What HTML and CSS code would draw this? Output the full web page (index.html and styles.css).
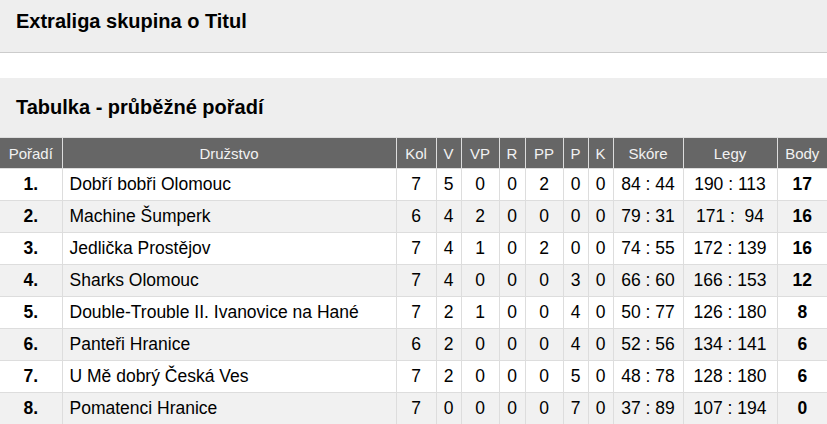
FILE: index.html
```html
<!DOCTYPE html>
<html lang="cs">
<head>
<meta charset="utf-8">
<title>Extraliga skupina o Titul</title>
<link rel="stylesheet" href="styles.css">
</head>
<body>
<header class="page-head">
  <h1 class="page-title">Extraliga skupina o Titul</h1>
</header>
<section class="panel">
  <h2 class="panel-title">Tabulka - průběžné pořadí</h2>
  <table class="standings">
    <colgroup>
      <col class="c-rank"><col class="c-team"><col class="c-kol"><col class="c-v"><col class="c-vp"><col class="c-r"><col class="c-pp"><col class="c-p"><col class="c-k"><col class="c-score"><col class="c-legs"><col class="c-pts">
    </colgroup>
    <thead>
      <tr><th>Pořadí</th><th>Družstvo</th><th>Kol</th><th>V</th><th>VP</th><th>R</th><th>PP</th><th>P</th><th>K</th><th>Skóre</th><th>Legy</th><th>Body</th></tr>
    </thead>
    <tbody>
      <tr><td class="rank">1.</td><td class="team">Dobří bobři Olomouc</td><td>7</td><td>5</td><td>0</td><td>0</td><td>2</td><td>0</td><td>0</td><td>84 : 44</td><td>190 : 113</td><td class="pts">17</td></tr>
      <tr><td class="rank">2.</td><td class="team">Machine Šumperk</td><td>6</td><td>4</td><td>2</td><td>0</td><td>0</td><td>0</td><td>0</td><td>79 : 31</td><td>171 :&nbsp;&nbsp;94</td><td class="pts">16</td></tr>
      <tr><td class="rank">3.</td><td class="team">Jedlička Prostějov</td><td>7</td><td>4</td><td>1</td><td>0</td><td>2</td><td>0</td><td>0</td><td>74 : 55</td><td>172 : 139</td><td class="pts">16</td></tr>
      <tr><td class="rank">4.</td><td class="team">Sharks Olomouc</td><td>7</td><td>4</td><td>0</td><td>0</td><td>0</td><td>3</td><td>0</td><td>66 : 60</td><td>166 : 153</td><td class="pts">12</td></tr>
      <tr><td class="rank">5.</td><td class="team">Double-Trouble II. Ivanovice na Hané</td><td>7</td><td>2</td><td>1</td><td>0</td><td>0</td><td>4</td><td>0</td><td>50 : 77</td><td>126 : 180</td><td class="pts">8</td></tr>
      <tr><td class="rank">6.</td><td class="team">Panteři Hranice</td><td>6</td><td>2</td><td>0</td><td>0</td><td>0</td><td>4</td><td>0</td><td>52 : 56</td><td>134 : 141</td><td class="pts">6</td></tr>
      <tr><td class="rank">7.</td><td class="team">U Mě dobrý Česká Ves</td><td>7</td><td>2</td><td>0</td><td>0</td><td>0</td><td>5</td><td>0</td><td>48 : 78</td><td>128 : 180</td><td class="pts">6</td></tr>
      <tr><td class="rank">8.</td><td class="team">Pomatenci Hranice</td><td>7</td><td>0</td><td>0</td><td>0</td><td>0</td><td>7</td><td>0</td><td>37 : 89</td><td>107 : 194</td><td class="pts">0</td></tr>
    </tbody>
  </table>
</section>
</body>
</html>
```
FILE: styles.css
```css
html, body {
  margin: 0;
  padding: 0;
  background: #fff;
  font-family: "Liberation Sans", Arial, sans-serif;
  color: #000;
}

.page-head {
  background: #eeeeee;
  border-bottom: 1px solid #cccccc;
  height: 53px;
  box-sizing: border-box;
  padding: 10px 16px 0;
  margin-bottom: 25px;
}

.page-title,
.panel-title {
  margin: 0;
  font-size: 20px;
  line-height: 23px;
  font-weight: bold;
}

.panel {
  background: #eeeeee;
  padding-top: 18px;
}

.panel-title {
  padding: 0 16px 18px;
}

.standings {
  width: 100%;
  border-collapse: collapse;
  table-layout: fixed;
  background: #fff;
  border-top: 1px solid #dddddd;
}

.c-rank { width: 62px; }
.c-team { width: 334px; }
.c-kol { width: 40px; }
.c-v { width: 25px; }
.c-vp { width: 38px; }
.c-r { width: 26px; }
.c-pp { width: 38px; }
.c-p { width: 25px; }
.c-k { width: 25px; }
.c-score { width: 70px; }
.c-legs { width: 94px; }
.c-pts { width: 50px; }

.standings th {
  background: #666666;
  color: #f2f2f2;
  font-weight: normal;
  font-size: 15px;
  height: 30px;
  padding: 0;
  text-align: center;
  border-left: 1px solid #dddddd;
  border-right: 1px solid #dddddd;
  white-space: nowrap;
}

.standings td {
  font-size: 17.5px;
  height: 31px;
  padding: 0;
  text-align: center;
  border: 1px solid #dddddd;
  white-space: nowrap;
}

.standings tr > :first-child { border-left: none; }
.standings tr > :last-child { border-right: none; }

.standings tbody tr:nth-child(even) td {
  background: #f1f1f1;
}

.standings td.team {
  text-align: left;
  padding-left: 7px;
}

.standings td.rank,
.standings td.pts {
  font-weight: bold;
}
```
